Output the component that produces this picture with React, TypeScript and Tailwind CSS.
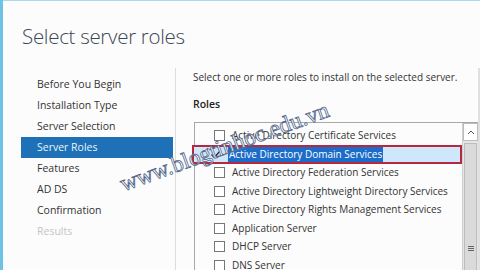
import React from "react";

const nav = [
  "Before You Begin",
  "Installation Type",
  "Server Selection",
  "Server Roles",
  "Features",
  "AD DS",
  "Confirmation",
  "Results",
];

const roles = [
  "Active Directory Certificate Services",
  "Active Directory Domain Services",
  "Active Directory Federation Services",
  "Active Directory Lightweight Directory Services",
  "Active Directory Rights Management Services",
  "Application Server",
  "DHCP Server",
  "DNS Server",
];

export default function App() {
  return (
    <div
      className="relative w-[480px] h-[270px] overflow-hidden bg-[#fcfcfc] flex"
      style={{ fontFamily: '"Open Sans", "Noto Sans", sans-serif' }}
    >
      <div className="w-[3px] h-full bg-[#6cc3e4] shrink-0" />
      <div className="flex-1 flex flex-col border-t border-[#a9d8ec] min-h-0">
        <div className="shrink-0 pl-[19px] pt-[22px] h-[67px] text-[20.5px] leading-[26px] font-light text-[#3b4753] tracking-[-0.3px] whitespace-nowrap">
          Select server roles
        </div>
        <div className="flex flex-1 min-h-0">
          <div className="w-[152px] ml-[18px] pt-[6px] flex flex-col shrink-0">
            {nav.map((n, i) => (
              <div
                key={n}
                className={
                  "shrink-0 h-[21px] flex items-center pl-[16px] text-[10.5px] " +
                  (i === 3
                    ? "bg-[#1e70b7] text-[#eaf4fc]"
                    : i === 7
                    ? "text-[#c4c4c4]"
                    : "text-[#333]")
                }
              >
                {n}
              </div>
            ))}
          </div>
          <div className="w-px bg-[#dcdcdc] ml-[2px] shrink-0" />
          <div className="flex-1 pl-[17px] flex flex-col min-h-0">
            <div className="shrink-0 pt-[1px] h-[22px] text-[10px] leading-[16px] text-[#333] whitespace-nowrap">
              Select one or more roles to install on the selected server.
            </div>
            <div className="shrink-0 pt-[6px] h-[32px] text-[10.5px] leading-[16px] font-semibold text-[#222]">
              Roles
            </div>
            <div className="flex-1 min-h-0 border-t border-l border-[#a8a8a8] flex ml-[1px]">
              <div className="flex-1 pt-[3px] flex flex-col">
                {roles.map((r, i) =>
                  i === 1 ? (
                    <div
                      key={r}
                      className="shrink-0 relative h-[19px] flex items-center bg-[#cfe7fb] -ml-[3px] border-2 border-[#b5283d] pl-[16px] text-[10px] text-white whitespace-nowrap"
                    >
                      <div className="w-[11px] h-[11px] mr-[7px] flex items-center justify-center bg-[#cfe7fb]">
                        <svg width="11" height="11" viewBox="0 0 11 11">
                          <path d="M1.5 5.5 L4.3 8.5 L10 2" fill="none" stroke="#222" strokeWidth="1.2" />
                        </svg>
                      </div>
                      <span className="bg-[#1c6cc9] px-[1px] leading-[15px]">{r}</span>
                    </div>
                  ) : (
                    <div key={r} className="shrink-0 h-[18.5px] flex items-center pl-[19px] text-[10px] text-[#333] whitespace-nowrap">
                      <div className="w-[11px] h-[11px] border border-[#777] bg-white mr-[7px] shrink-0" />
                      {r}
                    </div>
                  )
                )}
              </div>
              <div className="w-[16px] h-[148px] bg-[#e6e6e6] border-l border-[#cfcfcf] flex flex-col">
                <div className="shrink-0 h-[18px] bg-white border border-[#bcbcbc] flex items-center justify-center">
                  <svg width="8" height="5" viewBox="0 0 8 5">
                    <path d="M1 4 L4 1 L7 4" fill="none" stroke="#555" strokeWidth="1" />
                  </svg>
                </div>
                <div className="flex-1 mx-[1px] mt-[2px] bg-[#dadada] border border-[#bdbdbd] flex flex-col items-center justify-start pt-[102px]">
                  <div className="flex flex-col gap-[1px]">
                    <div className="w-[6px] h-px bg-[#666]" />
                    <div className="w-[6px] h-px bg-[#666]" />
                    <div className="w-[6px] h-px bg-[#666]" />
                  </div>
                </div>
              </div>
            </div>
          </div>
          <div className="w-[2px] bg-[#e0e0e0]" />
        </div>
      </div>
      <div
        className="absolute left-[126px] top-[170px] text-[23px] leading-[28px] text-white whitespace-nowrap pointer-events-none origin-bottom-left [-webkit-text-stroke:0.8px_#51658a]"
        style={{ fontFamily: '"Liberation Serif", serif', transform: "rotate(-20deg)" }}
      >
        www.blogtinhoc.edu.vn
      </div>
    </div>
  );
}
